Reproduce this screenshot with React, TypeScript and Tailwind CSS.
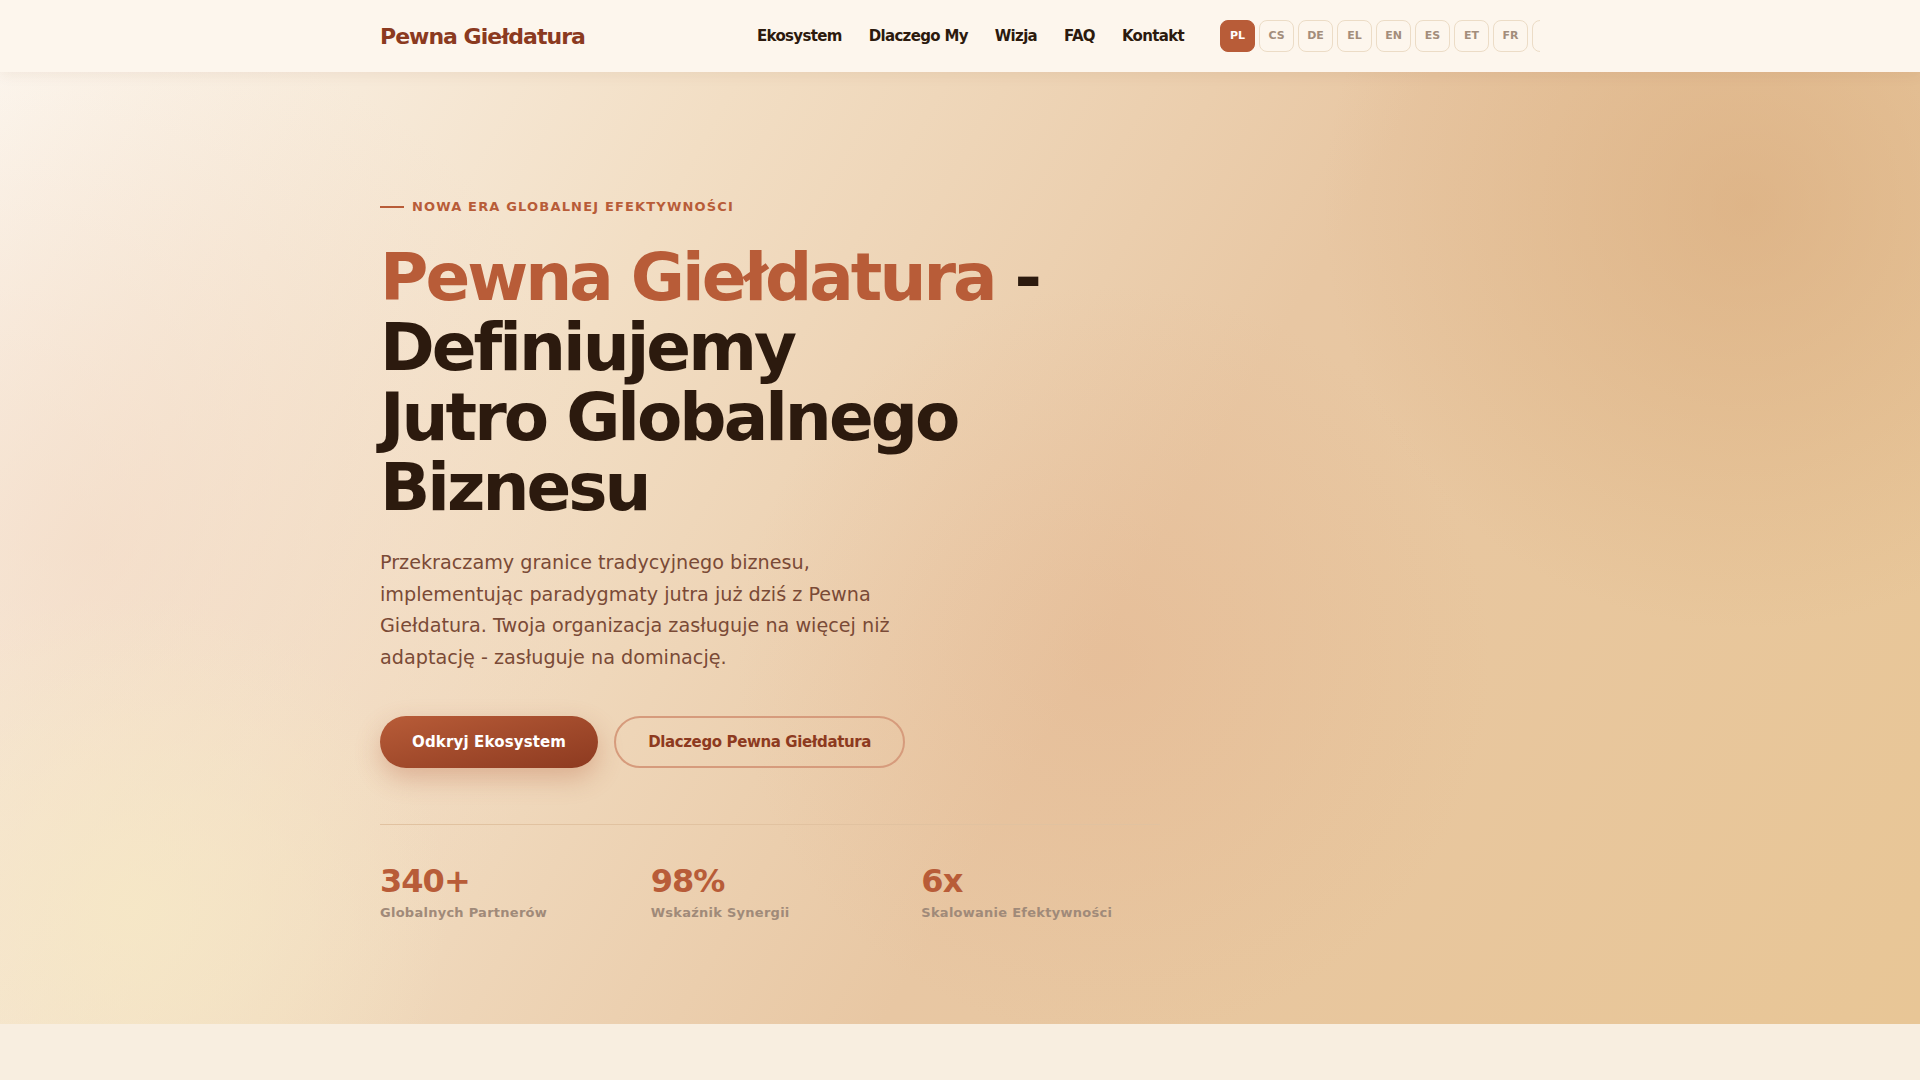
import React from 'react'

const navLinks = ['Ekosystem', 'Dlaczego My', 'Wizja', 'FAQ', 'Kontakt']

const languages = [
  'PL', 'CS', 'DE', 'EL', 'EN', 'ES', 'ET', 'FR', 'HR', 'HU', 'IT', 'LT', 'LV', 'NL', 'PT', 'RO', 'SK', 'SL', 'SV',
]

const stats = [
  { value: '340+', label: 'Globalnych Partnerów' },
  { value: '98%', label: 'Wskaźnik Synergii' },
  { value: '6x', label: 'Skalowanie Efektywności' },
]

function Header() {
  return (
    <header className="relative z-10 h-[72px] bg-[#fdf6ed] shadow-[0_2px_14px_rgba(120,70,30,0.08)]">
      <div className="mx-auto flex h-full max-w-[1200px] items-center justify-between px-5">
        <a href="#" className="text-[22px] font-bold tracking-[-0.045em] text-[#8b3a1f]">
          Pewna Giełdatura
        </a>

        <div className="flex items-center gap-9">
          <nav className="flex items-center gap-[27px] text-[15px] font-bold tracking-[-0.045em] text-[#2c1a0e]">
            {navLinks.map((link) => (
              <a key={link} href="#">
                {link}
              </a>
            ))}
          </nav>

          {/* Language switcher */}
          <div className="flex w-[320px] gap-1 overflow-hidden">
            {languages.map((lang) => (
              <button
                key={lang}
                className={
                  lang === 'PL'
                    ? 'flex h-8 w-[35px] shrink-0 items-center justify-center rounded-lg border border-[#b85c38] bg-[#b85c38] text-[11px] font-bold text-white'
                    : 'flex h-8 w-[35px] shrink-0 items-center justify-center rounded-lg border border-[#ecdcc6] text-[11px] font-bold text-[#a38d7b]'
                }
              >
                {lang}
              </button>
            ))}
          </div>
        </div>
      </div>
    </header>
  )
}

function Hero() {
  return (
    <section className="h-[952px] bg-[radial-gradient(circle_at_91%_14%,rgba(214,166,118,0.55)_0%,transparent_22%),radial-gradient(circle_at_7%_88%,rgba(246,232,198,0.85)_0%,transparent_16%),radial-gradient(circle_at_5%_50%,rgba(242,214,192,0.55)_0%,transparent_28%),radial-gradient(circle_at_58%_62%,rgba(226,172,132,0.3)_0%,transparent_30%),linear-gradient(120deg,#fcf6ee_0%,#f2dec4_30%,#e8c7a3_58%,#e8c696_100%)]">
      <div className="mx-auto max-w-[1200px] px-5 pt-[125px]">
        <div className="max-w-[780px]">
          {/* Eyebrow */}
          <div className="mb-[26px] flex items-center gap-2">
            <span className="h-[2px] w-6 bg-[#b85c38]" />
            <span className="text-[13px] font-bold leading-5 tracking-[0.09em] text-[#b85c38]">
              NOWA ERA GLOBALNEJ EFEKTYWNOŚCI
            </span>
          </div>

          <h1 className="mb-6 text-[66px] font-bold leading-[70px] tracking-[-0.045em] text-[#2c1a0e]">
            <span className="text-[#b85c38]">Pewna Giełdatura</span> -<br />
            Definiujemy
            <br />
            Jutro Globalnego
            <br />
            Biznesu
          </h1>

          <p className="mb-[43px] max-w-[560px] text-[19.2px] leading-[31.5px] text-[#7a4a36]">
            Przekraczamy granice tradycyjnego biznesu, implementując paradygmaty jutra już dziś z Pewna
            Giełdatura. Twoja organizacja zasługuje na więcej niż adaptację - zasługuje na dominację.
          </p>

          <div className="flex gap-4">
            <a
              href="#"
              className="rounded-full bg-gradient-to-br from-[#b85c38] to-[#8d3a20] px-8 py-4 text-[15px] font-bold leading-5 tracking-[0.01em] text-white shadow-[0_10px_26px_rgba(178,88,52,0.32)]"
            >
              Odkryj Ekosystem
            </a>
            <a
              href="#"
              className="rounded-full border-2 border-[#d69b7c] px-8 py-[14px] text-[15px] font-bold leading-5 tracking-[-0.025em] text-[#8d3a20]"
            >
              Dlaczego Pewna Giełdatura
            </a>
          </div>

          {/* Stats */}
          <div className="mt-14 grid grid-cols-3 gap-8 border-t border-[#e1c2a0] pt-[37px]">
            {stats.map((s) => (
              <div key={s.label}>
                <div className="text-[32px] font-bold leading-[38px] tracking-[-0.03em] text-[#b85c38]">
                  {s.value}
                </div>
                <div className="mt-[3px] text-[13px] font-bold leading-5 tracking-[0.02em] text-[#a08a79]">
                  {s.label}
                </div>
              </div>
            ))}
          </div>
        </div>
      </div>
    </section>
  )
}

export default function App() {
  return (
    <div className="min-h-screen bg-[#f8eee0] font-['DejaVu_Sans',sans-serif]">
      <Header />
      <Hero />
    </div>
  )
}
